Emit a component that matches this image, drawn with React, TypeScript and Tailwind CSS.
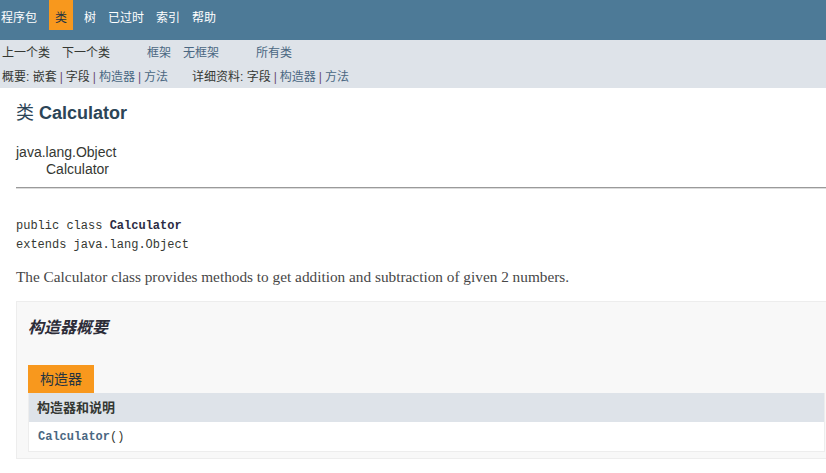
import React from 'react';

const cjk = '"Liberation Sans", "Noto Sans CJK SC", sans-serif';
const mono = '"Liberation Mono", "Noto Sans CJK SC", monospace';
const serif = '"Liberation Serif", "Noto Sans CJK SC", serif';

const topItems = ['程序包', '类', '树', '已过时', '索引', '帮助'];

const Sep = () => <span className="text-[#6a4a7a] mx-[3px]">|</span>;

const App = () => {
  return (
    <div className="w-[826px] h-[473px] overflow-hidden bg-white text-[#353833]" style={{ fontFamily: cjk }}>
      {/* top nav */}
      <div className="h-[40px] bg-[#4d7a97] flex text-[12px] text-white pl-[1px]">
        {topItems.map((item, i) =>
          i === 1 ? (
            <div key={item} className="h-[30px] pt-[11px] leading-[14px] px-[6px] ml-[6px] mr-[5px] bg-[#f8981d] text-[#253441]">
              {item}
            </div>
          ) : (
            <div key={item} className={`h-[30px] pt-[11px] leading-[14px] ${i === 0 ? 'pr-[6px]' : 'px-[6px]'}`}>
              {item}
            </div>
          )
        )}
      </div>

      {/* sub nav */}
      <div className="h-[48px] bg-[#dee3e9] text-[12px] pl-[2px] pt-[5px]">
        <div className="flex h-[14px] leading-[14px] mt-[1px]">
          <span>上一个类</span>
          <span className="ml-[12px]">下一个类</span>
          <span className="ml-[37px] text-[#4a6782]">框架</span>
          <span className="ml-[12px] text-[#4a6782]">无框架</span>
          <span className="ml-[37px] text-[#4a6782]">所有类</span>
        </div>
        <div className="flex h-[14px] leading-[14px] mt-[10px]">
          <span className="w-[190px]">
            概要: 嵌套<Sep />字段<Sep />
            <span className="text-[#4a6782]">构造器</span>
            <Sep />
            <span className="text-[#4a6782]">方法</span>
          </span>
          <span>
            详细资料: 字段<Sep />
            <span className="text-[#4a6782]">构造器</span>
            <Sep />
            <span className="text-[#4a6782]">方法</span>
          </span>
        </div>
      </div>

      <div className="pl-[16px]">
        <h2 className="mt-[14px] text-[18px] leading-[22px] font-bold text-[#2c4557]">
          <span className="font-normal">类</span> Calculator
        </h2>
        <div className="mt-[20px] text-[14px] leading-[17px]">
          <div>java.lang.Object</div>
          <div className="pl-[30px]">Calculator</div>
        </div>
        <div className="mt-[9px] border-t border-[#9a9a9a] border-b border-b-[#dcdcdc]" />

        <div className="mt-[28px] text-[12px] leading-[19px]" style={{ fontFamily: mono }}>
          <div>
            public class <span className="font-bold text-[#2c2c44]">Calculator</span>
          </div>
          <div>extends java.lang.Object</div>
        </div>
        <p className="mt-[12px] text-[15.3px] leading-[20px] text-[#474747]" style={{ fontFamily: serif }}>
          The Calculator class provides methods to get addition and subtraction of given 2 numbers.
        </p>

        {/* constructor summary */}
        <div className="mt-[14px] mr-[-20px] border border-[#ededed] bg-[#f8f8f8] pl-[11px] pr-[20px] pt-[16px] pb-[6px]">
          <h3 className="text-[16px] leading-[20px] italic font-bold text-[#2c2c38]">构造器概要</h3>
          <div className="mt-[27px]">
            <div className="inline-block h-[28px] px-[12px] pt-[5px] leading-[18px] text-[14px] bg-[#f8981d] text-[#253441]">
              构造器
            </div>
            <div className="border border-t-0 border-[#ededed] bg-white">
              <div className="h-[29px] flex items-center pl-[8px] bg-[#dee3e9] text-[13px] font-bold">构造器和说明</div>
              <div className="h-[29px] flex items-center pl-[9px] text-[12px]" style={{ fontFamily: mono }}>
                <span className="font-bold text-[#4a6782]">Calculator</span>()
              </div>
            </div>
          </div>
        </div>
      </div>
    </div>
  );
};

export default App;
